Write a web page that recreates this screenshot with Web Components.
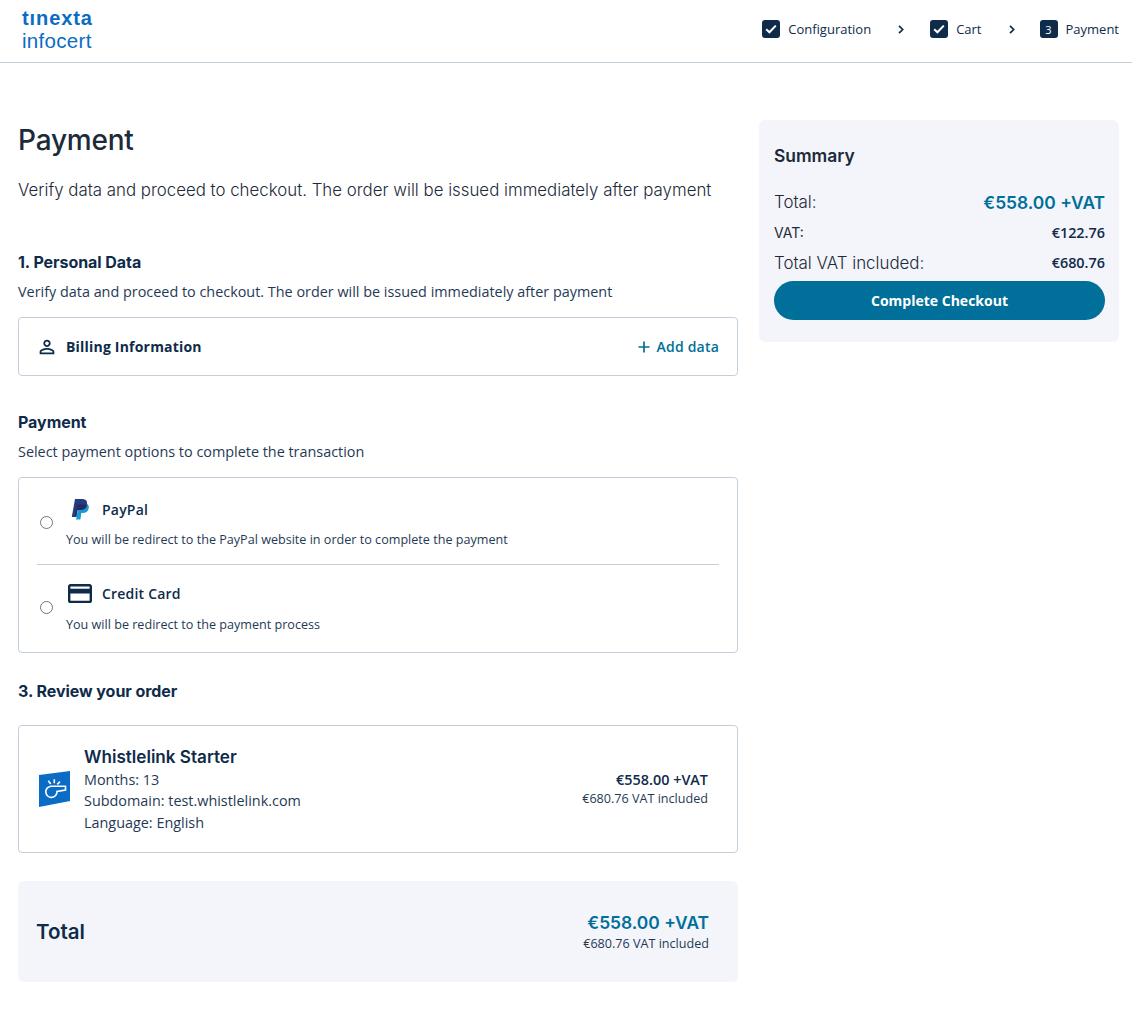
<!DOCTYPE html>
<html lang="en">
<head>
<meta charset="utf-8">
<title>Payment</title>
<style>
  html, body { margin: 0; background: #fff; }
  body { font-family: "Open Sans", sans-serif; color: #0f2b4a; }
</style>
</head>
<body>
<top-bar></top-bar>
<checkout-page>
  <main-column slot="main">
    <page-title heading="Payment">Verify data and proceed to checkout. The order will be issued immediately after payment</page-title>
    <section-head heading="1. Personal Data" style="margin-top:47px">Verify data and proceed to checkout. The order will be issued immediately after payment</section-head>
    <billing-card></billing-card>
    <section-head heading="Payment" style="margin-top:34px">Select payment options to complete the transaction</section-head>
    <payment-card></payment-card>
    <section-head heading="3. Review your order" style="margin-top:26px"></section-head>
    <order-card></order-card>
    <total-card></total-card>
  </main-column>
  <summary-panel slot="side"></summary-panel>
</checkout-page>

<script>
const HEAD_FONT = 'Inter, "Liberation Sans", sans-serif';

class TopBar extends HTMLElement {
  constructor() {
    super();
    this.attachShadow({ mode: 'open' });
  }
  connectedCallback() {
    const check = `<svg width="12" height="10" viewBox="0 0 12 10"><path d="M1.2 5.2 4.4 8.3 10.800 1.600" fill="none" stroke="#fff" stroke-width="2"/></svg>`;
    const chevron = `<svg class="chev" width="6" height="9" viewBox="0 0 6 9"><path d="M1 .8 4.700 4.500 1 8.200" fill="none" stroke="#0f2b4a" stroke-width="1.700"/></svg>`;
    this.shadowRoot.innerHTML = `
      <style>
        :host { display: flex; justify-content: space-between; align-items: center; height: 62px; border-bottom: 1px solid #c3d0dc; padding: 0 13px 0 22px; }
        .logo { display: flex; flex-direction: column; color: #0a6cc4; font-family: "Liberation Sans", sans-serif; margin-top: -3px; }
        .logo b { font-size: 20px; line-height: 21px; font-weight: 700; letter-spacing: 0.9px; }
        .logo span { font-size: 20.500px; line-height: 23px; letter-spacing: 0.3px; }
        .steps { display: flex; align-items: center; font-size: 13px; font-weight: 500; color: #0f2b4a; margin-top: -4px; }
        .box { width: 18px; height: 18px; border-radius: 3px; background: #0f2b4a; color: #fff; display: flex; align-items: center; justify-content: center; font-size: 11px; margin-right: 8px; }
        .chev { margin: 0 26px 0 27px; }
        .chev.tight { margin-right: 25px; }
      </style>
      <div class="logo"><b>tınexta</b><span>infocert</span></div>
      <div class="steps">
        <div class="box">${check}</div>Configuration${chevron}
        <div class="box">${check}</div>Cart${chevron.replace('class="chev"', 'class="chev tight"')}
        <div class="box">3</div>Payment
      </div>`;
  }
}

class CheckoutPage extends HTMLElement {
  constructor() {
    super();
    this.attachShadow({ mode: 'open' });
    this.shadowRoot.innerHTML = `
      <style>
        :host { display: grid; grid-template-columns: 720px 360px; column-gap: 21px; padding: 57px 13px 0 18px; }
      </style>
      <slot name="main"></slot>
      <slot name="side"></slot>`;
  }
}

class MainColumn extends HTMLElement {
  constructor() {
    super();
    this.attachShadow({ mode: 'open' });
    this.shadowRoot.innerHTML = `<style>:host { display: block; }</style><slot></slot>`;
  }
}

class PageTitle extends HTMLElement {
  constructor() {
    super();
    this.attachShadow({ mode: 'open' });
  }
  connectedCallback() {
    this.shadowRoot.innerHTML = `
      <style>
        :host { display: block; }
        h1 { margin: 0; font: 500 28px/40px ${HEAD_FONT}; color: #1c2a3a; letter-spacing: -0.2px; }
        p { margin: 17px 0 0; font: 300 16.85px/26px ${HEAD_FONT}; color: #1c2a3a; }
      </style>
      <h1>${this.getAttribute('heading')}</h1>
      <p><slot></slot></p>`;
  }
}

class SectionHead extends HTMLElement {
  constructor() {
    super();
    this.attachShadow({ mode: 'open' });
  }
  connectedCallback() {
    this.shadowRoot.innerHTML = `
      <style>
        :host { display: block; }
        h2 { margin: 0; font: 700 16px/24px ${HEAD_FONT}; letter-spacing: -0.05px; color: #0f2b4a; }
        p { margin: 8px 0 0; font-size: 14.4px; line-height: 20px; color: #1f3a55; }
      </style>
      <h2>${this.getAttribute('heading')}</h2>
      ${this.textContent.trim() ? '<p><slot></slot></p>' : ''}`;
  }
}

class BillingCard extends HTMLElement {
  constructor() {
    super();
    this.attachShadow({ mode: 'open' });
    this.shadowRoot.innerHTML = `
      <style>
        :host { display: flex; align-items: center; justify-content: space-between; box-sizing: border-box; height: 59px; margin-top: 15px; border: 1px solid #c3d0dc; border-radius: 4px; padding: 0 18px 0 17px; }
        .left { display: flex; align-items: center; gap: 8px; font-size: 14px; font-weight: 700; color: #0f2b4a; letter-spacing: 0.2px; }
        .add { display: flex; align-items: center; gap: 7px; font-size: 14px; font-weight: 600; color: #006f99; letter-spacing: 0.2px; }
      </style>
      <div class="left">
        <svg width="22" height="22" viewBox="0 0 24 24"><path fill="#0f2b4a" d="M12 6c1.100 0 2 .9 2 2s-.9 2-2 2-2-.9-2-2 .9-2 2-2m0 9c2.700 0 5.800 1.290 6 2v1H6v-.99c.2-.72 3.300-2.010 6-2.010M12 4C9.790 4 8 5.790 8 8s1.790 4 4 4 4-1.790 4-4-1.790-4-4-4zm0 9c-2.670 0-8 1.340-8 4v3h16v-3c0-2.660-5.330-4-8-4z"/></svg>
        Billing Information
      </div>
      <div class="add">
        <svg width="12" height="12" viewBox="0 0 12 12"><path d="M6 .5v11M.5 6h11" stroke="#006f99" stroke-width="1.700"/></svg>
        Add data
      </div>`;
  }
}

class PaymentCard extends HTMLElement {
  constructor() {
    super();
    this.attachShadow({ mode: 'open' });
    this.shadowRoot.innerHTML = `
      <style>
        :host { display: block; box-sizing: border-box; height: 176px; margin-top: 15px; border: 1px solid #c3d0dc; border-radius: 4px; padding: 0 18px; }
        .opt { display: flex; align-items: center; height: 86px; box-sizing: border-box; }
        .opt + .opt { border-top: 1px solid #c3d0dc; height: 88px; padding-bottom: 6px; }
        input { width: 13px; height: 13px; margin: 3px 0 0 3px; flex: none; accent-color: #006f99; }
        .opt:first-child input { margin-top: 5px; }
        .body { margin-left: 13px; }
        .opt:first-child .body { margin-top: 8px; }
        .title { display: flex; align-items: center; height: 32px; font-size: 14px; font-weight: 600; color: #0f2b4a; letter-spacing: 0.2px; }
        .ico { width: 36px; display: flex; flex: none; }
        .sub { font-size: 12.6px; line-height: 18px; color: #1f3a55; margin-top: 6px; }
      </style>
      <div class="opt">
        <input type="radio" name="pay">
        <div class="body">
          <div class="title">
            <div class="ico"><svg style="margin-left:5px" width="18" height="21" viewBox="0 0 18 21"><path fill="#253b80" d="M4 0h7c3.500 0 5.500 1.800 5 5-.7 4.300-3.700 6-7.300 6H6.400L5.200 18H.8z"/><path fill="#179bd7" d="M16.200 4.800c1.300 1 1.900 2.400 1.500 4.400-.7 3.400-3 4.900-6 4.900h-1.400L9.400 20.500H5.100l.4-2.500 1.200-6.800h2.200c3.500 0 6.500-1.500 7.300-6.400z"/><path fill="#222d65" d="M6.300 5.500h6.500c1.300 0 2.500.3 3.300 1-.8 3.200-3.800 4.700-7.200 4.700H6.400L5.300 18H3.800z"/></svg></div>
            PayPal
          </div>
          <div class="sub">You will be redirect to the PayPal website in order to complete the payment</div>
        </div>
      </div>
      <div class="opt">
        <input type="radio" name="pay">
        <div class="body">
          <div class="title">
            <div class="ico"><svg style="margin:-1px 0 0 2px" width="24" height="19" viewBox="2 4 20 16" preserveAspectRatio="none"><path fill="#0f2b4a" d="M20 4H4c-1.110 0-1.990.89-1.990 2L2 18c0 1.110.89 2 2 2h16c1.110 0 2-.89 2-2V6c0-1.110-.89-2-2-2zm0 14H4v-6h16v6zm0-10H4V6h16v2z"/></svg></div>
            Credit Card
          </div>
          <div class="sub">You will be redirect to the payment process</div>
        </div>
      </div>`;
  }
}

class OrderCard extends HTMLElement {
  constructor() {
    super();
    this.attachShadow({ mode: 'open' });
    this.shadowRoot.innerHTML = `
      <style>
        :host { display: flex; align-items: center; box-sizing: border-box; height: 128px; margin-top: 22px; border: 1px solid #c3d0dc; border-radius: 4px; padding: 0 29px 0 20px; }
        svg { flex: none; margin-right: 14px; }
        .info { flex: 1; font-size: 14.4px; line-height: 21.500px; color: #1f3a55; }
        .name { font: 600 17.100px/24px ${HEAD_FONT}; color: #0f2b4a; }
        .price { text-align: right; font-size: 12.6px; line-height: 18px; color: #1f3a55; }
        .price b { display: block; font-size: 14.4px; line-height: 20px; font-weight: 600; color: #0f2b4a; }
      </style>
      <svg width="31" height="36" viewBox="0 0 31 36">
        <path fill="#0a6cc4" d="M0 4 31 0V30L0 36z"/>
        <g fill="none" stroke="#fff" stroke-width="1.600">
          <path d="M12 15.200H26.500V19L18 20.500A5.600 5.600 0 1 1 12 15.200z"/>
          <path d="M9.300 9.700l2.400 3.300M15.300 8.300v4M21 10.700l-2.700 2.600"/>
        </g>
      </svg>
      <div class="info">
        <div class="name">Whistlelink Starter</div>
        <div>Months: 13</div>
        <div>Subdomain: test.whistlelink.com</div>
        <div>Language: English</div>
      </div>
      <div class="price"><b>€558.00 +VAT</b>€680.76 VAT included</div>`;
  }
}

class TotalCard extends HTMLElement {
  constructor() {
    super();
    this.attachShadow({ mode: 'open' });
    this.shadowRoot.innerHTML = `
      <style>
        :host { display: flex; align-items: center; justify-content: space-between; box-sizing: border-box; height: 101px; margin-top: 28px; background: #f4f5fa; border-radius: 6px; padding: 0 29px 0 18px; }
        .label { font: 600 20.500px/30px ${HEAD_FONT}; color: #0f2b4a; }
        .price { text-align: right; font-size: 12.6px; line-height: 18px; color: #1f3a55; }
        .price b { display: block; font: 600 17.400px/24px ${HEAD_FONT}; color: #006f99; }
      </style>
      <div class="label">Total</div>
      <div class="price"><b>€558.00 +VAT</b>€680.76 VAT included</div>`;
  }
}

class SummaryPanel extends HTMLElement {
  constructor() {
    super();
    this.attachShadow({ mode: 'open' });
    this.shadowRoot.innerHTML = `
      <style>
        :host { display: block; box-sizing: border-box; height: 222px; background: #f4f5fa; border-radius: 6px; padding: 23px 14px 0 15px; }
        h3 { margin: 0 0 18px; font: 600 17.400px/26px ${HEAD_FONT}; color: #1c2a3a; }
        .row { display: flex; justify-content: space-between; align-items: center; font: 300 16.900px/30px ${HEAD_FONT}; color: #1c2a3a; }
        .row.first { line-height: 31px; }
        .row.small { font-size: 14px; font-weight: 400; }
        .big { font-size: 17.400px; font-weight: 600; color: #006f99; }
        .num { font: 600 14.400px/30px "Open Sans", sans-serif; color: #0f2b4a; }
        button { display: block; width: 100%; height: 39px; margin-top: 3px; border: 0; border-radius: 20px; background: #006f99; color: #fff; font: 700 14px "Open Sans", sans-serif; }
      </style>
      <h3>Summary</h3>
      <div class="row first"><span>Total:</span><span class="big">€558.00 +VAT</span></div>
      <div class="row small"><span>VAT:</span><span class="num">€122.76</span></div>
      <div class="row"><span>Total VAT included:</span><span class="num">€680.76</span></div>
      <button>Complete Checkout</button>`;
  }
}

customElements.define('top-bar', TopBar);
customElements.define('checkout-page', CheckoutPage);
customElements.define('main-column', MainColumn);
customElements.define('page-title', PageTitle);
customElements.define('section-head', SectionHead);
customElements.define('billing-card', BillingCard);
customElements.define('payment-card', PaymentCard);
customElements.define('order-card', OrderCard);
customElements.define('total-card', TotalCard);
customElements.define('summary-panel', SummaryPanel);
</script>
</body>
</html>
